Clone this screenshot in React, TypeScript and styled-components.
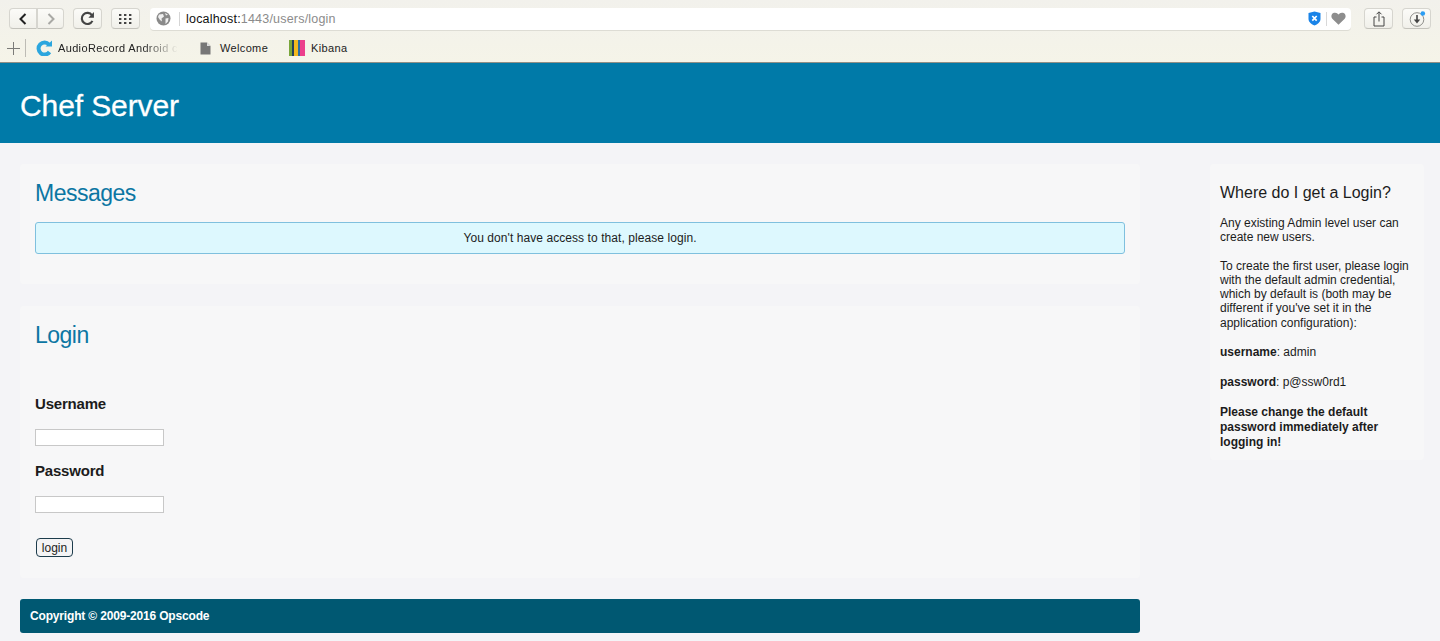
import React from 'react';
import styled, { createGlobalStyle } from 'styled-components';

const GlobalStyle = createGlobalStyle`
  html, body {
    margin: 0;
    padding: 0;
    height: 641px;
    overflow: hidden;
    background: #f4f4f7;
    font-family: "Liberation Sans", Arial, sans-serif;
    color: #1c1c1c;
  }
  * { box-sizing: border-box; }
`;

const Chrome = styled.div`
  height: 63px;
  background: linear-gradient(180deg, #f2f1ec 0%, #f5f4e8 100%);
  border-bottom: 1px solid #8f8f86;
`;

const Toolbar = styled.div`
  height: 36px;
  display: flex;
  align-items: center;
  padding: 1px 9px 0 9px;
`;

const ChromeButton = styled.div<{ $w: number; $ml?: number; $group?: 'left' | 'right' }>`
  width: ${(p) => p.$w}px;
  height: 21px;
  margin-left: ${(p) => p.$ml ?? 0}px;
  display: flex;
  align-items: center;
  justify-content: center;
  flex-shrink: 0;
  background: linear-gradient(180deg, #fbfbf8 0%, #f1f0ea 100%);
  border: 1px solid #d6d5cf;
  border-bottom-color: #c4c3bc;
  border-radius: ${(p) =>
    p.$group === 'left' ? '4px 0 0 4px' : p.$group === 'right' ? '0 4px 4px 0' : '4px'};
`;

const AddressBar = styled.div`
  flex: 1;
  height: 22px;
  margin-left: 10px;
  display: flex;
  align-items: center;
  padding: 0 5px 0 6px;
  background: #fff;
  border-radius: 4px;
  box-shadow: 0 1px 0 #dddcd4;
`;

const Url = styled.div`
  flex: 1;
  margin-left: 8px;
  padding-left: 6px;
  font-size: 12.5px;
  line-height: 14px;
  letter-spacing: 0.2px;
  color: #111;
  border-left: 1px solid #d5d5d5;
  span { color: #8b8b8b; }
`;

const BarDivider = styled.div`
  width: 1px;
  height: 14px;
  margin: 0 4px 0 5px;
  background: #d8d8d8;
`;

const Bookmarks = styled.div`
  height: 26px;
  display: flex;
  align-items: center;
  padding: 0 0 2px 7px;
  font-size: 11px;
  letter-spacing: 0.35px;
  color: #222;
`;

const AddDivider = styled.div`
  width: 1px;
  height: 18px;
  margin: 0 10px 0 5px;
  background: #bdbcb5;
`;

const Bookmark = styled.div<{ $w: number; $gap?: number }>`
  width: ${(p) => p.$w}px;
  display: flex;
  align-items: center;
  gap: ${(p) => p.$gap ?? 6}px;
  flex-shrink: 0;
`;

const FadedLabel = styled.span`
  width: 120px;
  white-space: nowrap;
  overflow: hidden;
  -webkit-mask-image: linear-gradient(90deg, #000 70%, transparent 100%);
  mask-image: linear-gradient(90deg, #000 70%, transparent 100%);
`;

const Header = styled.header`
  height: 80px;
  padding: 0 20px;
  display: flex;
  align-items: center;
  background: #007aa8;
`;

const Brand = styled.h1`
  margin: 5px 0 0;
  font-size: 30px;
  font-weight: 400;
  letter-spacing: -0.1px;
  color: #fff;
  -webkit-text-stroke: 0.3px #fff;
`;

const Page = styled.div`
  display: flex;
  align-items: flex-start;
  justify-content: space-between;
  padding: 21px 16px 0 20px;
`;

const MainColumn = styled.main`
  width: 1120px;
  display: flex;
  flex-direction: column;
  gap: 22px;
`;

const Panel = styled.section<{ $h: number }>`
  height: ${(p) => p.$h}px;
  padding: 15px;
  background: #f7f7f8;
  border-radius: 4px;
`;

const PanelTitle = styled.h2`
  margin: 0;
  font-size: 23px;
  line-height: 28px;
  font-weight: 400;
  letter-spacing: -0.5px;
  color: #0c76a3;
`;

const Notice = styled.div`
  height: 32px;
  margin-top: 15px;
  display: flex;
  align-items: center;
  justify-content: center;
  font-size: 12px;
  letter-spacing: 0.07px;
  background: #ddf8fe;
  border: 1px solid #7fc0de;
  border-radius: 3px;
`;

const LoginForm = styled.form`
  margin-top: 46px;
  display: flex;
  flex-direction: column;
  align-items: flex-start;
`;

const FieldLabel = styled.label`
  font-size: 15px;
  line-height: 18px;
  font-weight: 700;
  letter-spacing: -0.2px;
  margin-bottom: 16px;
`;

const TextInput = styled.input`
  width: 129px;
  height: 17px;
  margin-bottom: 16px;
  padding: 0 2px;
  background: #fff;
  border: 1px solid #c8c8c8;
  border-radius: 0;
`;

const LoginButton = styled.button`
  width: 37px;
  height: 19px;
  margin: 9px 0 0 1px;
  padding: 0;
  font-family: inherit;
  font-size: 12px;
  color: #1c1c1c;
  background: #f4f4f5;
  border: 1px solid #1d3c4c;
  border-radius: 4px;
`;

const Footer = styled.footer`
  height: 34px;
  margin-top: -1px;
  padding: 0 10px;
  display: flex;
  align-items: center;
  font-size: 12px;
  font-weight: 700;
  letter-spacing: -0.17px;
  color: #fff;
  background: #005872;
  border-radius: 3px;
`;

const Sidebar = styled.aside`
  width: 214px;
  height: 296px;
  padding: 19px 10px 0;
  background: #f7f7f8;
  border-radius: 4px;
`;

const SideTitle = styled.h3`
  margin: 0 0 12.5px;
  font-size: 16px;
  line-height: 20px;
  font-weight: 400;
`;

const SideText = styled.p<{ $gap?: number }>`
  margin: 0 0 ${(p) => p.$gap ?? 14.5}px;
  font-size: 12px;
  line-height: 14.3px;
  strong { font-weight: 700; }
`;

const SideWarning = styled.p`
  margin: 0;
  font-size: 12px;
  line-height: 15px;
  font-weight: 700;
`;

function App() {
  return (
    <>
      <GlobalStyle />
      <Chrome>
        <Toolbar>
          <ChromeButton $w={28} $group="left">
            <svg width="10" height="12" viewBox="0 0 10 12" fill="none" stroke="#222" strokeWidth="2">
              <path d="M7.5 1 L2.5 6 L7.5 11" />
            </svg>
          </ChromeButton>
          <ChromeButton $w={27} $group="right">
            <svg width="10" height="12" viewBox="0 0 10 12" fill="none" stroke="#a9a9a5" strokeWidth="2">
              <path d="M2.5 1 L7.5 6 L2.5 11" />
            </svg>
          </ChromeButton>
          <ChromeButton $w={29} $ml={9}>
            <svg width="15" height="15" viewBox="0 0 14 14" fill="none">
              <path d="M11.6 9.2 A5.2 5.2 0 1 1 11.2 4" stroke="#444" strokeWidth="2" />
              <path d="M13 1 V6.2 H7.8 Z" fill="#444" />
            </svg>
          </ChromeButton>
          <ChromeButton $w={29} $ml={9}>
            <svg width="14" height="10" viewBox="0 0 14 10" fill="#444">
              {[0, 5, 10].map((x) =>
                [0, 4, 8].map((y) => <rect key={`${x}-${y}`} x={x} y={y} width="2.4" height="2" />),
              )}
            </svg>
          </ChromeButton>
          <AddressBar>
            <svg width="15" height="15" viewBox="0 0 15 15">
              <circle cx="7.5" cy="7.5" r="7" fill="#8a8a8a" />
              <path d="M3 3.5 L7 3 L8 5.5 L5.5 7.5 L6 10.5 L4 9 L2 6 Z M9.5 7.5 L12.5 7 L12 10.5 L9.5 13 Z M9 2 L12 3.5 L10 4.5 Z" fill="#efefef" />
            </svg>
            <Url>
              localhost:<span>1443/users/login</span>
            </Url>
            <svg width="13" height="15" viewBox="0 0 13 15">
              <path d="M6.5 0.5 L12.5 2 V8 C12.5 11 9.5 13.5 6.5 14.5 C3.5 13.5 0.5 11 0.5 8 V2 Z" fill="#1a84e8" />
              <path d="M4.3 5 L8.7 9.6 M8.7 5 L4.3 9.6" stroke="#fff" strokeWidth="1.7" />
            </svg>
            <BarDivider />
            <svg width="15" height="13" viewBox="0 0 15 13">
              <path d="M7.5 12.8 L1.3 6.8 C-0.4 4.8 0.3 1.6 3 0.8 C4.9 0.3 6.6 1.1 7.5 2.6 C8.4 1.1 10.1 0.3 12 0.8 C14.7 1.6 15.4 4.8 13.7 6.8 Z" fill="#8d8d8d" />
            </svg>
          </AddressBar>
          <ChromeButton $w={29} $ml={13}>
            <svg width="12" height="16" viewBox="0 0 12 16" fill="none" stroke="#444" strokeWidth="1">
              <path d="M3.5 6 H1 V15 H11 V6 H8.5" />
              <path d="M6 10.5 V1 M3.5 3.3 L6 0.8 L8.5 3.3" />
            </svg>
          </ChromeButton>
          <ChromeButton $w={29} $ml={9}>
            <svg width="18" height="18" viewBox="0 0 18 18" fill="none">
              <circle cx="9" cy="9.5" r="6.8" stroke="#8f8f8b" strokeWidth="1" />
              <path d="M9 5 V10" stroke="#444" strokeWidth="1.6" />
              <path d="M5.8 9.5 H12.2 L9 13.5 Z" fill="#444" />
              <circle cx="14.8" cy="3.5" r="2.3" fill="#2a9df4" />
            </svg>
          </ChromeButton>
        </Toolbar>
        <Bookmarks>
          <svg width="13" height="13" viewBox="0 0 13 13" stroke="#7b7b78" strokeWidth="1">
            <path d="M6.5 0 V13 M0 6.5 H13" />
          </svg>
          <AddDivider />
          <Bookmark $w={164}>
            <svg width="16" height="16" viewBox="0 0 16 16" fill="none">
              <path d="M13.5 12 A6 6 0 1 1 13 4.5" stroke="#2ba6de" strokeWidth="4" />
              <path d="M9.5 6.5 H16 V0.5 Z" fill="#2ba6de" />
            </svg>
            <FadedLabel>AudioRecord Android c</FadedLabel>
          </Bookmark>
          <Bookmark $w={89} $gap={9}>
            <svg width="11" height="13" viewBox="0 0 11 13">
              <path d="M0.5 0.5 H7 L10.5 4 V12.5 H0.5 Z" fill="#777" />
              <path d="M7 0.5 V4 H10.5" fill="#ddd" />
            </svg>
            <span>Welcome</span>
          </Bookmark>
          <Bookmark $w={70}>
            <svg width="16" height="16" viewBox="0 0 16 16">
              <rect x="0" width="3" height="16" fill="#7aa63a" />
              <rect x="3" width="2" height="16" fill="#24405c" />
              <rect x="5" width="4" height="16" fill="#f2b81f" />
              <rect x="9" width="2" height="16" fill="#2c6fa5" />
              <rect x="11" width="5" height="16" fill="#ec3f8c" />
            </svg>
            <span>Kibana</span>
          </Bookmark>
        </Bookmarks>
      </Chrome>
      <Header>
        <Brand>Chef Server</Brand>
      </Header>
      <Page>
        <MainColumn>
          <Panel $h={120}>
            <PanelTitle>Messages</PanelTitle>
            <Notice>You don't have access to that, please login.</Notice>
          </Panel>
          <Panel $h={272}>
            <PanelTitle>Login</PanelTitle>
            <LoginForm onSubmit={(e) => e.preventDefault()}>
              <FieldLabel htmlFor="username">Username</FieldLabel>
              <TextInput id="username" type="text" />
              <FieldLabel htmlFor="password">Password</FieldLabel>
              <TextInput id="password" type="password" />
              <LoginButton type="submit">login</LoginButton>
            </LoginForm>
          </Panel>
          <Footer>Copyright © 2009-2016 Opscode</Footer>
        </MainColumn>
        <Sidebar>
          <SideTitle>Where do I get a Login?</SideTitle>
          <SideText>
            Any existing Admin level user can
            <br />
            create new users.
          </SideText>
          <SideText>
            To create the first user, please login
            <br />
            with the default admin credential,
            <br />
            which by default is (both may be
            <br />
            different if you've set it in the
            <br />
            application configuration):
          </SideText>
          <SideText $gap={16}>
            <strong>username</strong>: admin
          </SideText>
          <SideText $gap={15.5}>
            <strong>password</strong>: p@ssw0rd1
          </SideText>
          <SideWarning>
            Please change the default
            <br />
            password immediately after
            <br />
            logging in!
          </SideWarning>
        </Sidebar>
      </Page>
    </>
  );
}

export default App;
